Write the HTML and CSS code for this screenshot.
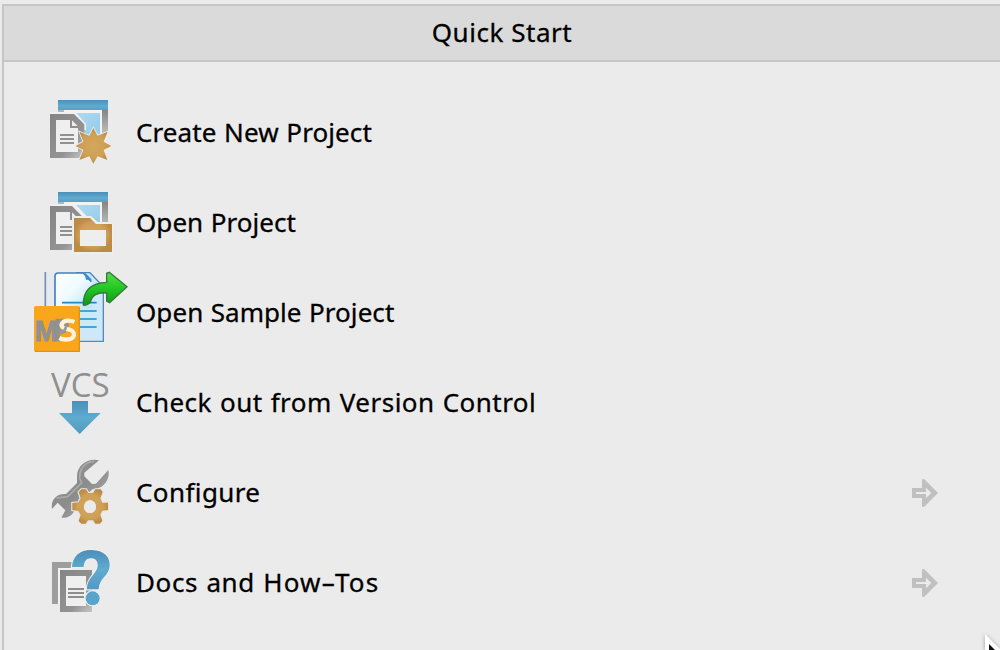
FILE: index.html
```html
<!DOCTYPE html>
<html lang="en">
<head>
<meta charset="utf-8">
<title>Quick Start</title>
<link rel="stylesheet" href="styles.css">
</head>
<body>
<svg class="defs" aria-hidden="true">
  <defs>
    <linearGradient id="blue" x2="0" y2="1"><stop stop-color="#4a8fb8"/><stop offset=".5" stop-color="#60abd0"/><stop offset="1" stop-color="#5299c2"/></linearGradient>
    <linearGradient id="sky" x2="1" y2="1"><stop stop-color="#b4dcf3"/><stop offset="1" stop-color="#90caeb"/></linearGradient>
    <linearGradient id="gray" x2="1" y2="1"><stop stop-color="#858585"/><stop offset=".65" stop-color="#939393"/><stop offset="1" stop-color="#c5c5c5"/></linearGradient>
    <linearGradient id="side" x2="0" y2="1"><stop stop-color="#858585"/><stop offset="1" stop-color="#bebebe"/></linearGradient>
    <radialGradient id="gold"><stop stop-color="#d5a75c"/><stop offset=".7" stop-color="#cea057"/><stop offset="1" stop-color="#bc8b45"/></radialGradient>
    <linearGradient id="green" x2="0" y2="1"><stop stop-color="#54df48"/><stop offset=".5" stop-color="#22c622"/><stop offset="1" stop-color="#129619"/></linearGradient>
    <linearGradient id="paper" x2="1" y2="1"><stop stop-color="#fff"/><stop offset=".5" stop-color="#f0faff"/><stop offset="1" stop-color="#b7e2f8"/></linearGradient>
    <linearGradient id="metal" x2="1" y2="1"><stop stop-color="#999"/><stop offset=".5" stop-color="#8b8b8b"/><stop offset="1" stop-color="#b5b5b5"/></linearGradient>
    <symbol id="go" viewBox="0 0 84 84">
      <path fill="#c0c0c0" fill-rule="evenodd" d="M0 27H30V1H37L78 42 37 83H30V57H0ZM12 39V45H42V58L58 42 42 26V39Z"/>
    </symbol>
    <symbol id="window" viewBox="0 0 300 270">
      <path fill="url(#blue)" d="M84 39H234V75H84Z"/>
      <path fill="#b5b5b5" d="M84 69H102V75H84Z"/>
      <path fill="url(#side)" d="M216 69H234V140H216Z"/>
      <path fill="#f3f3f3" d="M102 69H216V150H102Z"/>
      <path fill="url(#sky)" d="M108 78H210V150H108Z"/>
    </symbol>
  </defs>
</svg>
<main class="panel">
  <header class="header"><h1 class="title">Quick Start</h1></header>
  <ul class="actions">
    <li class="action">
      <svg class="icon" viewBox="0 -9 300 270">
        <use href="#window" x="0" y="-9" width="300" height="270"/>
        <path fill="#f1f1f1" d="M60 66H136L168 102V120H60Z"/>
        <path fill="url(#gray)" d="M60 72H132L163 103V204H60Z"/>
        <path fill="#efefef" d="M78 90H120V114H144V186H78Z"/>
        <path fill="#eee" d="M126 91V108H143Z"/>
        <path stroke="#919191" stroke-width="6" d="M90 135H132M90 147H132M90 159H132"/>
        <path fill="url(#gold)" stroke="#eee" stroke-width="5" paint-order="stroke" d="M190 114 203 137 233 125 221 155 244 168 221 180 232 210 203 199 190 221 178 199 148 210 160 180 137 168 160 155 148 125 178 137Z"/>
      </svg>
      <span class="label create">Create New Project</span>
    </li>
    <li class="action">
      <svg class="icon" viewBox="0 -9 300 270">
        <use href="#window" x="0" y="-3" width="300" height="270"/>
        <path fill="#f1f1f1" d="M60 73H136L170 108V125H60Z"/>
        <path fill="url(#gray)" d="M60 78H126L165 118V210H60Z"/>
        <path fill="#efefef" d="M78 96H120V120H144V192H78Z"/>
        <path fill="#f0f0f0" d="M126 97V114H143Z"/>
        <path stroke="#919191" stroke-width="6" d="M90 141H132M90 153H132M90 165H132"/>
        <path fill="#eee" d="M126 108H183L203 126H251V222H126Z"/>
        <path fill="url(#gold)" fill-rule="evenodd" d="M132 114H180L198 132H246V216H132ZM150 150V198H228V150Z"/>
      </svg>
      <span class="label open">Open Project</span>
    </li>
    <li class="action">
      <svg class="icon" viewBox="0 6 300 270">
        <path fill="#e4eaf0" d="M43 21H115V126H43Z"/>
        <path stroke="#7890ae" stroke-width="5" d="M46 21V125"/>
        <path fill="#cde8f8" stroke="#5589b8" stroke-width="4" d="M140 23H180L220 65V229H110V60Z"/>
        <path fill="url(#paper)" d="M75 130V34Q75 24 85 24H160L184 50V130Z"/>
        <path fill="none" stroke="#477fc2" stroke-width="5" d="M75 130V34Q75 24 85 24H160L184 50"/>
        <path fill="#2d91d5" d="M163 21 186 44H168Z"/>
        <path stroke="#218ac9" stroke-width="5" d="M96 113H200M148 138H200M148 162H200M148 186H200"/>
        <path fill="url(#green)" stroke="#36763d" stroke-width="4" d="M160 120C159 79 179 54 230 52V25L238 22 291 65 239 113 230 108V84C203 80 185 92 181 112Q170 123 160 120Z"/>
        <rect x="12" y="123" width="138" height="138" rx="5" fill="#faa61a"/>
        <path fill="none" stroke="#dd921c" stroke-width="4" d="M148 127V259H15"/>
        <text class="mps" x="14" y="229" textLength="68" lengthAdjust="spacingAndGlyphs">M</text>
        <path fill="none" stroke="#919191" stroke-width="14" d="M84 229V168H98Q111 168 109 185 107 201 84 201"/>
        <path fill="none" stroke="#fff1dc" stroke-width="13" d="M133 171Q116 163 101 170C87 182 98 191 116 193 141 199 134 224 112 223Q99 225 88 219"/>
        <path fill="none" stroke="#999" stroke-width="8" d="M88 202Q106 202 108 184"/>
      </svg>
      <span class="label sample">Open Sample Project</span>
    </li>
    <li class="action">
      <svg class="icon" viewBox="0 -9 300 270">
        <text class="vcs" x="63" y="111" textLength="176" lengthAdjust="spacingAndGlyphs">VCS</text>
        <path fill="url(#blue)" d="M126 123H174V159H212L149 222 87 159H126Z"/>
      </svg>
      <span class="label checkout">Check out from Version Control</span>
    </li>
    <li class="action">
      <svg class="icon" viewBox="0 -9 300 270">
        <path fill="url(#metal)" d="M207 31C173 23 141 46 141 79V99L108 132C85 129 61 145 66 177L83 158 106 181 94 203C116 207 135 190 137 170L187 118C215 119 242 94 235 60L198 101 186 102 163 79V68Z"/>
        <path fill="none" stroke="#aaa" stroke-width="5" d="M193 34C164 35 148 57 149 85L155 99 113 140 79 144"/>
        <path fill="url(#gold)" fill-rule="evenodd" stroke="#e5e5e5" stroke-width="7" paint-order="stroke" d="M154 118H168L175 129H189L196 118H212L218 126 211 145 217 158H234V180L217 182 211 194 217 213 209 221H196L189 211H174L167 221H154L146 213 152 195 145 183 127 180V159L145 157 152 145 146 126ZM180 151A18 19 0 1 0 180 189 18 19 0 1 0 180 151Z"/>
        <ellipse cx="180" cy="170" rx="18" ry="19" fill="#ebebeb"/>
      </svg>
      <span class="label configure">Configure</span>
      <svg class="arrow"><use href="#go"/></svg>
    </li>
    <li class="action">
      <svg class="icon" viewBox="0 -9 300 270">
        <path fill="#9e9e9e" d="M66 66H126V84H84V192H66Z"/>
        <path fill="#f2f2f2" d="M84 84H126V90H90V192H84Z"/>
        <path fill="url(#gray)" d="M90 90H186V216H90Z"/>
        <path fill="#efefef" d="M108 108H168V198H108Z"/>
        <path stroke="#8d8d8d" stroke-width="6" d="M114 147H162M114 159H162M114 171H162"/>
        <path fill="url(#blue)" stroke="#eee" stroke-width="7" paint-order="stroke" d="M126 81C128 47 152 29 185 30 221 31 240 49 239 77 238 107 207 114 206 148H171C171 111 201 103 203 77 204 63 196 55 183 55 169 55 162 65 161 81Z"/>
        <circle cx="188" cy="175" r="21" fill="#59a4ca" stroke="#eee" stroke-width="7" paint-order="stroke"/>
      </svg>
      <span class="label docs">Docs and <span class="howto">How–Tos</span></span>
      <svg class="arrow"><use href="#go"/></svg>
    </li>
  </ul>
</main>
<svg class="pointer" viewBox="0 0 16 17"><path fill="#fff" d="M1 1 16 16V17H1Z"/><path fill="#111" d="M5 11 11 17H5Z"/></svg>
</body>
</html>
```
FILE: styles.css
```css
* { box-sizing: border-box; }
body {
  margin: 0;
  height: 650px;
  padding: 4px 0 0 2px;
  overflow: hidden;
  background: #ebebeb;
  color: #000;
  font-family: "Noto Sans", "Open Sans", sans-serif;
}
.defs { position: absolute; width: 0; height: 0; }
.panel {
  height: 646px;
  border: solid #c6c6c6;
  border-width: 2px 0 0 2px;
}
.header {
  height: 56px;
  display: flex;
  justify-content: center;
  align-items: flex-start;
  background: #dadada;
  border-bottom: 2px solid #c6c6c6;
}
.title {
  margin: 0;
  font-size: 26px;
  font-weight: 400;
  line-height: 52px;
  letter-spacing: .55px;
  -webkit-text-stroke: .3px #000;
}
.actions {
  margin: 0;
  padding: 25px 60px 0 26px;
  list-style: none;
}
.action {
  height: 90px;
  display: flex;
  align-items: center;
}
.icon { width: 100px; height: 90px; flex: none; }
.label {
  margin-left: 6px;
  font-size: 26px;
  line-height: 36px;
  white-space: nowrap;
  -webkit-text-stroke: .3px #000;
}
.create { letter-spacing: .1px; word-spacing: .7px; }
.open { letter-spacing: .05px; word-spacing: .7px; }
.sample { letter-spacing: .06px; word-spacing: .6px; }
.checkout { letter-spacing: .48px; word-spacing: .8px; }
.configure { letter-spacing: .4px; }
.docs { letter-spacing: .6px; word-spacing: 1px; }
.howto { letter-spacing: 1.2px; }
.arrow { width: 28px; height: 28px; margin: 2px 0 0 auto; }
.vcs { font: 98px "Open Sans", sans-serif; fill: #8f8f8f; }
.mps {
  font: bold 86px "Liberation Sans", sans-serif;
  fill: #919191;
  stroke: #919191;
  stroke-width: 3px;
}
.pointer {
  position: absolute;
  left: 984px;
  top: 633px;
  width: 16px;
  height: 17px;
  filter: drop-shadow(0 1px 2px #999);
}
```
